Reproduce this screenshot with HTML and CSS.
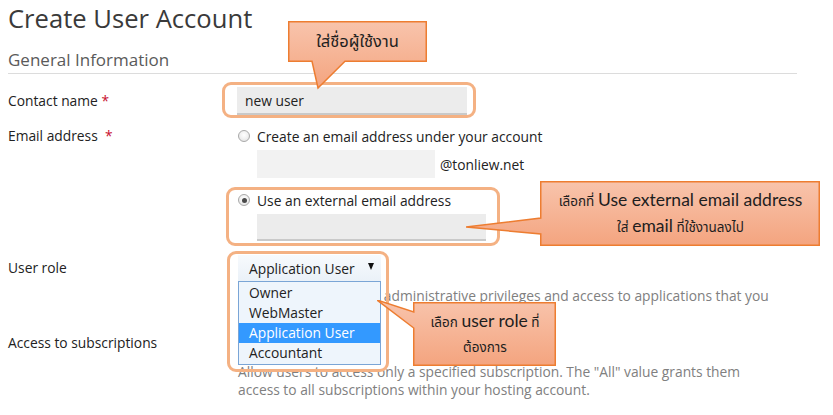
FILE: index.html
```html
<!DOCTYPE html>
<html lang="en">
<head>
<meta charset="utf-8">
<title>Create User Account</title>
<link rel="stylesheet" href="styles.css">
</head>
<body>
<div class="page">
  <h1 class="title">Create User Account</h1>
  <h2 class="section">General Information</h2>

  <div class="form">
    <div class="row row-contact">
      <div class="label">Contact name <span class="req">*</span></div>
      <div class="control"><div class="input input-name">new user</div></div>
    </div>

    <div class="row row-email">
      <div class="label label-top">Email address &nbsp;<span class="req">*</span></div>
      <div class="control">
        <div class="radio-line"><span class="radio"></span><span>Create an email address under your account</span></div>
        <div class="inline">
          <div class="input input-local"></div>
          <span class="domain">@tonliew.net</span>
        </div>
        <div class="radio-line radio-line-2"><span class="radio checked"></span><span>Use an external email address</span></div>
        <div class="input input-ext"></div>
      </div>
    </div>

    <div class="row row-role">
      <div class="label label-select">User role</div>
      <div class="control">
        <div class="select-wrap">
          <div class="select"><span>Application User</span><span class="arrow"></span></div>
          <ul class="dropdown">
            <li>Owner</li>
            <li>WebMaster</li>
            <li class="selected">Application User</li>
            <li>Accountant</li>
          </ul>
        </div>
        <p class="hint">Users in this role have administrative privileges and access to applications that you<br>manage.</p>
      </div>
    </div>

    <div class="row row-access">
      <div class="label label-select">Access to subscriptions</div>
      <div class="control">
        <div class="select select-plain"><span>All</span><span class="arrow"></span></div>
        <p class="hint">Allow users to access only a specified subscription. The "All" value grants them access to all subscriptions within your hosting account.</p>
      </div>
    </div>
  </div>

  <!-- highlight rings -->
  <div class="ring ring-name"></div>
  <div class="ring ring-email"></div>
  <div class="ring ring-role"></div>

  <!-- callouts -->
  <div class="callout callout-1">
    <svg class="callout-shape" width="140" height="70" viewBox="0 0 140 70">
      <defs>
        <linearGradient id="g1" x1="0" y1="0" x2="0" y2="1">
          <stop offset="0" stop-color="#f8c4ac"/>
          <stop offset="1" stop-color="#f4a47f"/>
        </linearGradient>
      </defs>
      <polygon points="0.75,0.75 138.25,0.75 138.25,40.25 57,40.25 30,67 24,40.25 0.75,40.25" fill="url(#g1)" stroke="#ed7d31" stroke-width="1.5"/>
    </svg>
    <div class="callout-text ct-1"><span class="th th-lg">ใส่ชื่อผู้ใช้งาน</span></div>
  </div>

  <div class="callout callout-2">
    <svg class="callout-shape" width="355" height="66" viewBox="0 0 355 66">
      <defs>
        <linearGradient id="g2" x1="0" y1="0" x2="0" y2="1">
          <stop offset="0" stop-color="#f8c4ac"/>
          <stop offset="1" stop-color="#f4a47f"/>
        </linearGradient>
      </defs>
      <polygon points="74.75,0.75 353.25,0.75 353.25,64.25 74.75,64.25 74.75,53 0,46 74.75,37" fill="url(#g2)" stroke="#ed7d31" stroke-width="1.5"/>
    </svg>
    <div class="callout-text ct-2">
      <div><span class="th">เลือกที่</span> <span class="en">Use external email address</span></div>
      <div><span class="th">ใส่</span> <span class="en">email</span> <span class="th">ที่ใช้งานลงไป</span></div>
    </div>
  </div>

  <div class="callout callout-3">
    <svg class="callout-shape" width="180" height="67" viewBox="0 0 180 67">
      <defs>
        <linearGradient id="g3" x1="0" y1="0" x2="0" y2="1">
          <stop offset="0" stop-color="#f8c4ac"/>
          <stop offset="1" stop-color="#f4a47f"/>
        </linearGradient>
      </defs>
      <polygon points="36.75,2.75 178.25,2.75 178.25,65.25 36.75,65.25 36.75,28 0,0 36.75,12" fill="url(#g3)" stroke="#ed7d31" stroke-width="1.5"/>
    </svg>
    <div class="callout-text ct-3">
      <div><span class="th">เลือก</span> <span class="en">user role</span> <span class="th">ที่</span></div>
      <div><span class="th">ต้องการ</span></div>
    </div>
  </div>
</div>
</body>
</html>
```

FILE: styles.css
```css
* { box-sizing: border-box; }

body {
  margin: 0;
  background: #ffffff;
  font-family: "Open Sans", "Noto Sans", sans-serif;
  font-size: 13.8px;
  color: #222222;
}

.page {
  position: relative;
  width: 833px;
  height: 415px;
  padding: 1px 36px 0 8px;
  overflow: hidden;
}

.title {
  margin: 0;
  font-size: 25.6px;
  line-height: 36px;
  font-weight: 400;
  color: #3a3a3a;
}

.section {
  margin: 11px 0 0;
  padding-bottom: 1px;
  font-size: 17px;
  line-height: 24px;
  font-weight: 400;
  color: #5a5a5a;
  border-bottom: 1px solid #dcdcdc;
}

.form {
  margin-top: 13px;
}

.row {
  display: grid;
  grid-template-columns: 229px 1fr;
}

.row-contact { align-items: center; }
.row-email { margin-top: 11px; }
.row-role { margin-top: 14px; }
.row-access { margin-top: 7px; }

.label {
  color: #222222;
  line-height: 20px;
}

.label-top { line-height: 20px; }
.label-select { line-height: 26px; }

.req { color: #c8102e; }

.input {
  height: 28px;
  background: #ececec;
  border-bottom: 2px solid #c9c9c9;
  padding: 0 8px;
  line-height: 27px;
  color: #222222;
}

.input-name { width: 230px; }

.radio-line {
  display: flex;
  align-items: center;
  gap: 7px;
  height: 20px;
  margin-left: 1px;
}

.radio-line-2 { margin-top: 12px; }

.radio {
  width: 12px;
  height: 12px;
  border-radius: 50%;
  border: 1px solid #a9a9a9;
  background: radial-gradient(circle at 50% 40%, #ffffff 0%, #f1f1f1 50%, #dcdcdc 100%);
  display: flex;
  align-items: center;
  justify-content: center;
}

.radio.checked::after {
  content: "";
  width: 5px;
  height: 5px;
  border-radius: 50%;
  background: #4a4a4a;
}

.inline {
  display: flex;
  align-items: center;
  gap: 5px;
  margin-top: 4px;
  margin-left: 20px;
}

.input-local {
  width: 178px;
  background: #f2f2f2;
  border-bottom: none;
}

.domain { color: #222222; }

.input-ext {
  width: 229px;
  height: 27px;
  margin-top: 4px;
  margin-left: 20px;
}

.select-wrap {
  position: relative;
  width: 143px;
  margin-left: 1px;
}

.select {
  width: 143px;
  height: 26px;
  display: flex;
  align-items: center;
  justify-content: space-between;
  padding: 0 7px 0 11px;
  background: linear-gradient(#f7fafd, #eaf1f8);
  color: #222222;
}

.select-plain { margin-left: 1px; }

.arrow {
  width: 0;
  height: 0;
  border-left: 3.5px solid transparent;
  border-right: 3.5px solid transparent;
  border-top: 7px solid #111111;
  margin-top: -3px;
}

.dropdown {
  position: absolute;
  top: 26px;
  left: 0;
  width: 143px;
  margin: 0;
  padding: 1px 0;
  list-style: none;
  background: #eef5fc;
  border: 1px solid #7aa5d6;
  z-index: 2;
}

.dropdown li {
  height: 20px;
  line-height: 20px;
  padding-left: 10px;
  color: #222222;
}

.dropdown li.selected {
  background: #3399ff;
  color: #ffffff;
}

.hint {
  margin: 6px 0 0 1px;
  width: 545px;
  line-height: 18px;
  color: #808080;
}

.row-access .hint { margin-top: 7px; }

/* highlight rings */
.ring {
  position: absolute;
  border: 3px solid #f4b183;
  border-radius: 9px;
  z-index: 3;
  pointer-events: none;
}

.ring-name { left: 222px; top: 82px; width: 254px; height: 36px; }
.ring-email { left: 226px; top: 187px; width: 274px; height: 59px; }
.ring-role { left: 227px; top: 251px; width: 162px; height: 121px; }

/* callouts */
.callout {
  position: absolute;
  z-index: 4;
}

.callout-shape {
  position: absolute;
  left: 0;
  top: 0;
  display: block;
}

.callout-text {
  position: absolute;
  display: flex;
  flex-direction: column;
  align-items: center;
  justify-content: center;
  color: #1e1e1e;
  text-align: center;
  white-space: nowrap;
}

.th {
  font-family: "Tahoma", "Leelawadee UI", "Noto Sans Thai", "Noto Sans", sans-serif;
  font-size: 13.5px;
}

.th-lg { font-size: 16.5px; }

.en {
  font-family: "Lato", "Open Sans", sans-serif;
  font-size: 17.5px;
}

.callout-1 { left: 288px; top: 21px; width: 140px; height: 70px; }
.ct-1 { left: 0; top: 0; width: 139px; height: 41px; }

.callout-2 { left: 466px; top: 181px; width: 355px; height: 66px; }
.ct-2 { left: 75px; top: 1px; width: 279px; height: 64px; line-height: 23px; }

.callout-3 { left: 377px; top: 300px; width: 180px; height: 67px; }
.ct-3 { left: 37px; top: 3px; width: 142px; height: 63px; line-height: 23px; }
```
